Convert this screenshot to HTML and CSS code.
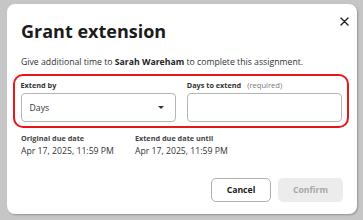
FILE: index.html
```html
<!DOCTYPE html>
<html lang="en">
<head>
    <meta charset="UTF-8">
    <meta name="viewport" content="width=device-width, initial-scale=1.0">
    <title>Grant extension</title>
    <link rel="stylesheet" href="styles.css">
</head>
<body>
    <div class="dialog">
        <!-- Header -->
        <div class="dialog-header">
            <h1 class="dialog-title">Grant extension</h1>
            <button class="close-btn" aria-label="Close">
                <svg width="9" height="9" viewBox="0 0 9 9">
                    <path d="M1 1 L8 8 M8 1 L1 8" stroke="#222" stroke-width="1.4" stroke-linecap="round"/>
                </svg>
            </button>
        </div>

        <p class="intro">Give additional time to <strong>Sarah Wareham</strong> to complete this assignment.</p>

        <!-- Highlighted fields -->
        <div class="field-row">
            <div class="field">
                <label class="field-label">Extend by</label>
                <div class="select-box">
                    <span>Days</span>
                    <span class="caret"></span>
                </div>
            </div>
            <div class="field">
                <label class="field-label">Days to extend <span class="hint">(required)</span></label>
                <input type="text" class="text-input">
            </div>
        </div>

        <div class="dates">
            <div class="date-col">
                <div class="date-label">Original due date</div>
                <div class="date-value">Apr 17, 2025, 11:59 PM</div>
            </div>
            <div class="date-col">
                <div class="date-label">Extend due date until</div>
                <div class="date-value">Apr 17, 2025, 11:59 PM</div>
            </div>
        </div>

        <div class="actions">
            <button class="btn btn-cancel">Cancel</button>
            <button class="btn btn-confirm" disabled>Confirm</button>
        </div>
    </div>
</body>
</html>
```

FILE: styles.css
```css
body {
    font-family: "Open Sans", Arial, sans-serif;
    margin: 0;
    padding: 4px 6px 6px 7px;
    background-color: #c6c6c6;
    color: #222;
    height: 220px;
    box-sizing: border-box;
}

.dialog {
    background-color: #fff;
    border-radius: 8px;
    height: 210px;
    box-sizing: border-box;
    padding: 13px 14px 0 14px;
    box-shadow: 1px 1px 2px rgba(0, 0, 0, 0.25);
}

.dialog-header {
    display: flex;
    justify-content: space-between;
    align-items: flex-start;
}

.dialog-title {
    margin: 0;
    font-size: 18px;
    font-weight: 700;
    line-height: 28px;
    color: #1c1c1c;
}

.close-btn {
    border: none;
    background: none;
    padding: 0;
    margin-top: -2px;
    margin-right: -7px;
    width: 12px;
    height: 12px;
    display: flex;
    align-items: center;
    justify-content: center;
}

.intro {
    margin: 11px 0 0 0;
    font-size: 8.7px;
    line-height: 12px;
    color: #333;
}

.intro strong {
    font-weight: 700;
    color: #222;
}

/* Red highlight around the fields */
.field-row {
    display: flex;
    gap: 11px;
    margin: 6px -6px 0 -8px;
    padding: 3px 5px 4px 5.5px;
    border: 2.5px solid #e8151b;
    border-radius: 10px;
}

.field {
    flex: 1;
    display: flex;
    flex-direction: column;
}

.field-label {
    font-size: 7.3px;
    font-weight: 700;
    line-height: 12px;
    color: #333;
    margin-bottom: 2px;
}

.hint {
    font-weight: 400;
    font-size: 7.6px;
    color: #777;
    margin-left: 4px;
}

.select-box {
    height: 29px;
    box-sizing: border-box;
    border: 1px solid #b5b5b5;
    border-radius: 4px;
    display: flex;
    align-items: center;
    justify-content: space-between;
    padding: 0 11px 0 8px;
    font-size: 8.7px;
    color: #333;
}

.caret {
    width: 0;
    height: 0;
    border-left: 3px solid transparent;
    border-right: 3px solid transparent;
    border-top: 3px solid #333;
}

.text-input {
    height: 29px;
    box-sizing: border-box;
    border: 1px solid #b5b5b5;
    border-radius: 4px;
    font-size: 8.7px;
    padding: 0 8px;
}

.dates {
    display: flex;
    gap: 21px;
    margin-top: 5px;
}

.date-label {
    font-size: 7.3px;
    font-weight: 700;
    line-height: 11px;
    color: #444;
}

.date-value {
    font-size: 8.7px;
    line-height: 14px;
    color: #333;
}

.actions {
    display: flex;
    justify-content: flex-end;
    gap: 7px;
    margin-top: 20px;
}

.btn {
    font-family: "Open Sans", Arial, sans-serif;
    height: 24px;
    border-radius: 5px;
    font-size: 8.7px;
    font-weight: 700;
}

.btn-cancel {
    width: 60px;
    background-color: #fff;
    border: 1px solid #b0b0b0;
    color: #222;
}

.btn-confirm {
    width: 65px;
    background-color: #ececec;
    border: none;
    color: #a8a8a8;
}
```
